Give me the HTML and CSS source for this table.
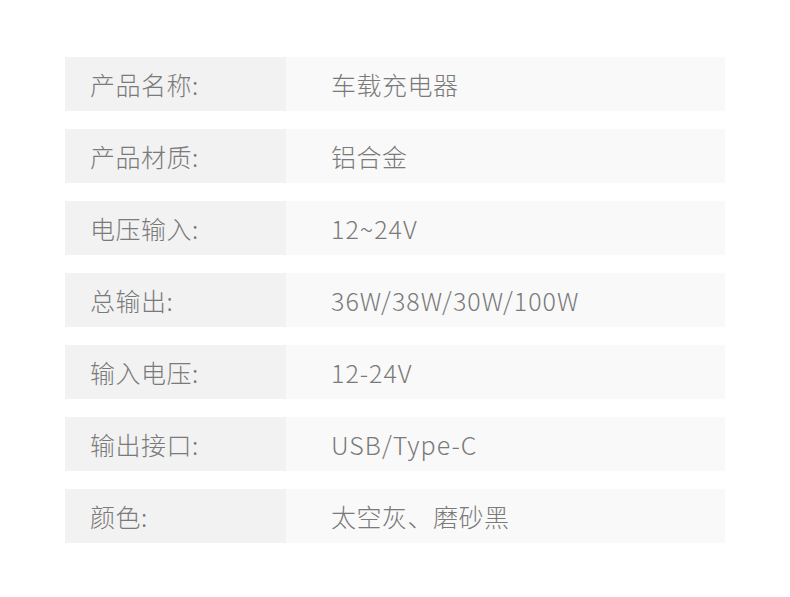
FILE: index.html
```html
<!DOCTYPE html>
<html lang="zh">
<head>
<meta charset="utf-8">
<link rel="stylesheet" href="styles.css">
</head>
<body>
<div class="spec">
  <div class="row"><div class="label">产品名称:</div><div class="value">车载充电器</div></div>
  <div class="row"><div class="label">产品材质:</div><div class="value">铝合金</div></div>
  <div class="row"><div class="label">电压输入:</div><div class="value latin">12~24V</div></div>
  <div class="row"><div class="label">总输出:</div><div class="value latin">36W/38W/30W/100W</div></div>
  <div class="row"><div class="label">输入电压:</div><div class="value latin">12-24V</div></div>
  <div class="row"><div class="label">输出接口:</div><div class="value latin">USB/Type-C</div></div>
  <div class="row"><div class="label">颜色:</div><div class="value">太空灰、磨砂黑</div></div>
</div>
</body>
</html>
```
FILE: styles.css
```css
html, body {
  margin: 0;
  padding: 0;
  background: #ffffff;
}
body {
  font-family: "Noto Sans CJK SC", "Noto Sans", sans-serif;
  font-weight: 300;
  color: #7a7a7a;
}
.spec {
  display: flex;
  flex-direction: column;
  gap: 18px;
  padding: 57px 0 0 65px;
  width: 660px;
}
.row {
  display: flex;
  height: 54px;
}
.label {
  width: 221px;
  background: #f2f2f2;
  padding-left: 25px;
  box-sizing: border-box;
  display: flex;
  align-items: center;
  font-size: 25px;
  letter-spacing: 0.5px;
}
.value {
  flex: 1;
  background: #f9f9f9;
  padding-left: 45px;
  display: flex;
  align-items: center;
  font-size: 25px;
  letter-spacing: 0.5px;
}
.value.latin {
  letter-spacing: 1px;
}
```
